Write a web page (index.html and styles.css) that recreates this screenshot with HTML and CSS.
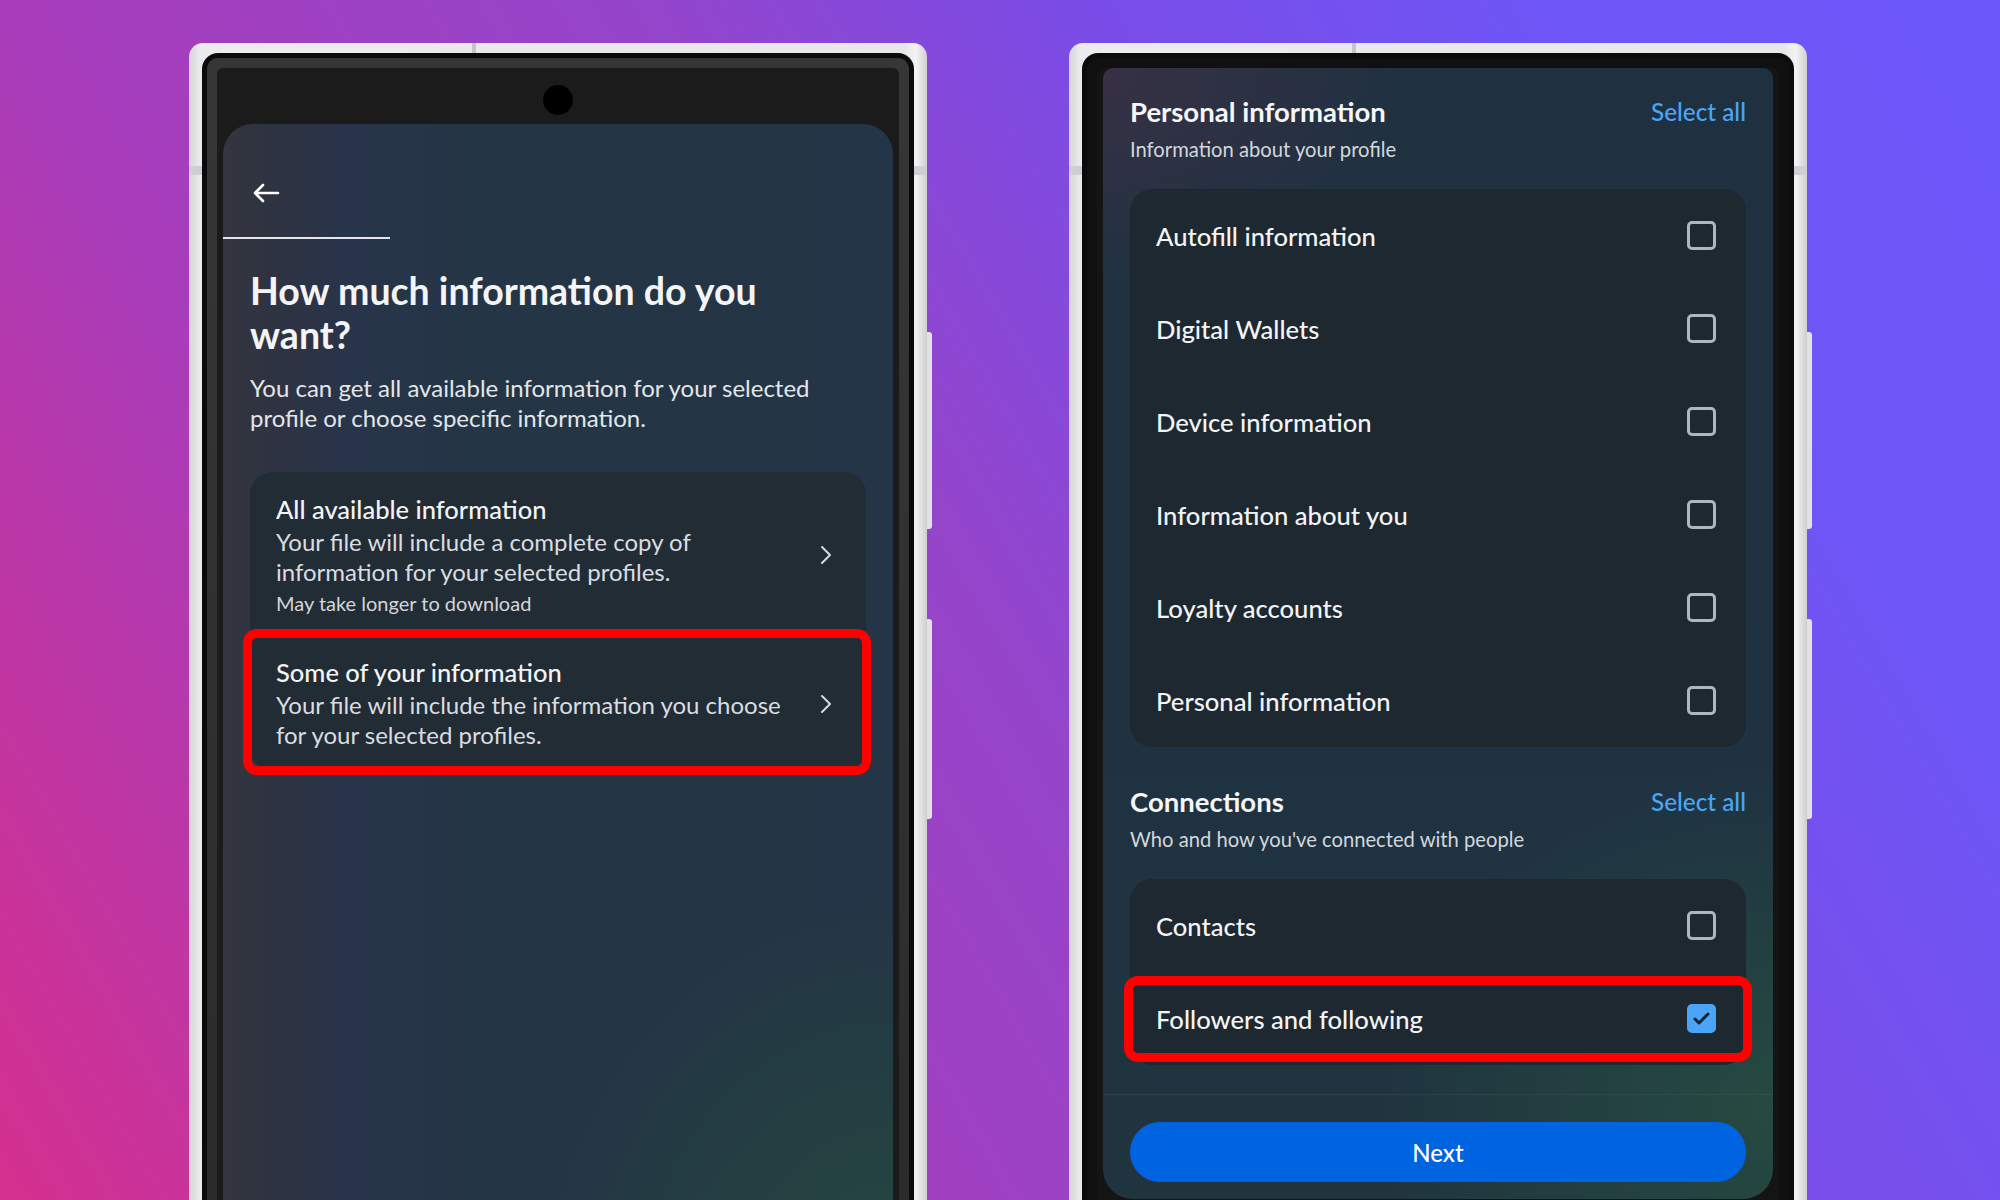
FILE: index.html
```html
<!DOCTYPE html>
<html lang="en">
<head>
<meta charset="utf-8">
<title>Download your information</title>
<link rel="stylesheet" href="styles.css">
</head>
<body>
<div class="stage">

  <div class="phone">
    <span class="notch-top"></span>
    <span class="notch-side notch-left"></span>
    <span class="notch-side notch-right"></span>
    <span class="side-btn side-btn-1"></span>
    <span class="side-btn side-btn-2"></span>
    <div class="bezel">
      <div class="screen">
        <div class="statusbar"><span class="camera"></span></div>
        <div class="panel panel-left">
          <div class="topnav">
            <svg class="back" width="28" height="22" viewBox="0 0 28 22" fill="none" stroke="#ffffff" stroke-width="2.6" stroke-linecap="round" stroke-linejoin="round"><path d="M26 11H3M11 3L3 11l8 8"/></svg>
          </div>
          <div class="nav-rule"></div>
          <div class="panel-body">
            <h1 class="title">How much information do you<br>want?</h1>
            <p class="lead">You can get all available information for your selected<br>profile or choose specific information.</p>
            <div class="options">
              <div class="option">
                <div class="option-text">
                  <div class="option-title">All available information</div>
                  <div class="option-desc">Your file will include a complete copy of<br>information for your selected profiles.</div>
                  <div class="option-note">May take longer to download</div>
                </div>
                <svg class="chev" width="14" height="20" viewBox="0 0 14 20" fill="none" stroke="#d6dadf" stroke-width="2" stroke-linecap="round" stroke-linejoin="round"><path d="M3 2l8 8-8 8"/></svg>
              </div>
              <div class="option option-marked">
                <div class="option-text">
                  <div class="option-title">Some of your information</div>
                  <div class="option-desc">Your file will include the information you choose<br>for your selected profiles.</div>
                </div>
                <svg class="chev" width="14" height="20" viewBox="0 0 14 20" fill="none" stroke="#d6dadf" stroke-width="2" stroke-linecap="round" stroke-linejoin="round"><path d="M3 2l8 8-8 8"/></svg>
                <span class="redbox redbox-option"></span>
              </div>
            </div>
          </div>
        </div>
      </div>
    </div>
  </div>

  <div class="phone">
    <span class="notch-top"></span>
    <span class="notch-side notch-left"></span>
    <span class="notch-side notch-right"></span>
    <span class="side-btn side-btn-1"></span>
    <span class="side-btn side-btn-2"></span>
    <div class="bezel bezel-dark">
      <div class="screen">
        <div class="panel panel-right">
          <section class="group group-first">
            <div class="group-head">
              <div>
                <h2 class="group-title">Personal information</h2>
                <p class="group-sub">Information about your profile</p>
              </div>
              <span class="select-all">Select all</span>
            </div>
            <ul class="list">
              <li class="row"><span>Autofill information</span><span class="check"></span></li>
              <li class="row"><span>Digital Wallets</span><span class="check"></span></li>
              <li class="row"><span>Device information</span><span class="check"></span></li>
              <li class="row"><span>Information about you</span><span class="check"></span></li>
              <li class="row"><span>Loyalty accounts</span><span class="check"></span></li>
              <li class="row"><span>Personal information</span><span class="check"></span></li>
            </ul>
          </section>
          <section class="group">
            <div class="group-head">
              <div>
                <h2 class="group-title">Connections</h2>
                <p class="group-sub">Who and how you've connected with people</p>
              </div>
              <span class="select-all">Select all</span>
            </div>
            <ul class="list">
              <li class="row"><span>Contacts</span><span class="check"></span></li>
              <li class="row row-marked"><span>Followers and following</span><span class="check check-on"><svg width="19" height="15" viewBox="0 0 19 15" fill="none" stroke="#18232d" stroke-width="3" stroke-linecap="round" stroke-linejoin="round"><path d="M3 8l4 4 9-9"/></svg></span><span class="redbox redbox-row"></span></li>
            </ul>
          </section>
          <div class="footer">
            <button class="next">Next</button>
          </div>
        </div>
      </div>
    </div>
  </div>

</div>
</body>
</html>
```

FILE: styles.css
```css
* {
  box-sizing: border-box;
  margin: 0;
  padding: 0;
}

html,
body {
  width: 2000px;
  height: 1200px;
  overflow: hidden;
}

body {
  font-family: "Lato", "Liberation Sans", sans-serif;
  color: #f2f3f5;
  background: linear-gradient(60deg, #d5308e 0%, #a83dbb 26%, #9545ca 49%, #7b4ce6 65%, #6f55f5 82%, #6b57fb 100%);
}

.stage {
  display: flex;
  gap: 142px;
  padding: 43px 0 0 189px;
  height: 1200px;
  overflow: hidden;
}

/* ---------- phone hardware ---------- */
.phone {
  position: relative;
  flex: none;
  width: 738px;
  height: 1260px;
  padding: 10px 13px 0;
  border-radius: 14px 14px 0 0;
  background: linear-gradient(90deg, #d4d4d6 0%, #ececee 1.5%, #e7e7e9 97%, #f3f3f4 98.5%, #cfcfd1 100%);
}

.notch-top {
  position: absolute;
  top: 0;
  left: 283px;
  width: 4px;
  height: 10px;
  background: #c6c6c9;
}

.notch-side {
  position: absolute;
  top: 123px;
  width: 13px;
  height: 9px;
  background: #cfcfd3;
}

.notch-left { left: 0; }
.notch-right { right: 0; }

.side-btn {
  position: absolute;
  right: -5px;
  width: 5px;
  border-radius: 0 3px 3px 0;
  background: #e2e2e4;
}

.side-btn-1 { top: 289px; height: 197px; }
.side-btn-2 { top: 576px; height: 200px; }

.bezel {
  height: 100%;
  padding: 10px 10px 0;
  border: 5px solid #0b0b0b;
  border-bottom: 0;
  border-radius: 16px 16px 0 0;
  background: linear-gradient(180deg, #363636 0%, #2a2a2a 100%);
}

.bezel-dark {
  background: #101010;
}

.screen {
  display: flex;
  flex-direction: column;
  height: 100%;
  padding: 0 6px;
  border-radius: 6px 6px 0 0;
  background: #1b1b1b;
}

.bezel-dark .screen {
  background: #141414;
}

.statusbar {
  display: flex;
  justify-content: center;
  height: 56px;
  padding-top: 17px;
  flex: none;
}

.camera {
  width: 30px;
  height: 30px;
  border-radius: 50%;
  background: #000;
}

/* ---------- shared panels ---------- */
.panel {
  flex: none;
  position: relative;
}

.panel-left {
  flex: 1;
  border-radius: 30px 30px 0 0;
  background:
    radial-gradient(ellipse 55% 35% at 100% 100%, rgba(38, 78, 60, 0.75), rgba(38, 78, 60, 0) 100%),
    linear-gradient(90deg, #33353f 0%, #2f3341 7%, #28344a 18%, #243545 36%, #233546 100%);
}

.topnav {
  height: 113px;
  padding: 58px 0 0 29px;
}

.back {
  display: block;
}

.nav-rule {
  width: 167px;
  height: 2px;
  background: #e4e6e9;
}

.panel-body {
  padding: 30px 27px 0;
}

.title {
  font-size: 37.5px;
  line-height: 44px;
  font-weight: 700;
  color: #f4f4f5;
}

.lead {
  margin-top: 16px;
  font-size: 24px;
  line-height: 30px;
  color: #e3e6e9;
}

.options {
  margin-top: 39px;
  border-radius: 22px;
  background: #222c35;
}

.option {
  position: relative;
  display: flex;
  align-items: center;
  padding: 22px 33px 20px 26px;
}

.option-text {
  flex: 1;
}

.option-title {
  font-size: 25.5px;
  line-height: 30px;
  font-weight: 500;
  color: #f3f4f6;
}

.option-desc {
  margin-top: 3px;
  font-size: 24px;
  line-height: 30px;
  color: #d9dde1;
}

.option-note {
  margin-top: 4px;
  font-size: 20px;
  line-height: 24px;
  color: #d2d6da;
}

.chev {
  flex: none;
  display: block;
}

.redbox {
  position: absolute;
  border: 9px solid #ff0000;
  border-radius: 14px;
  pointer-events: none;
}

.redbox-option {
  top: -6px;
  bottom: -5px;
  left: -7px;
  right: -5px;
}

/* ---------- right screen ---------- */
.panel-right {
  display: flex;
  flex-direction: column;
  border-radius: 10px 10px 30px 30px;
  background:
    radial-gradient(ellipse 60% 30% at 100% 92%, rgba(40, 84, 66, 0.7), rgba(40, 84, 66, 0) 100%),
    radial-gradient(ellipse 45% 20% at 0% 0%, rgba(62, 48, 70, 0.8), rgba(62, 48, 70, 0) 100%),
    linear-gradient(180deg, #1f3141 0%, #1f3242 60%, #20343e 100%);
}

.group {
  padding: 0 27px;
  margin-top: 40px;
}

.group-first {
  margin-top: 0;
  padding-top: 29px;
}

.group-head {
  display: flex;
  justify-content: space-between;
  align-items: flex-start;
}

.group-title {
  font-size: 27.5px;
  line-height: 30px;
  font-weight: 700;
  color: #f5f6f7;
}

.group-sub {
  margin-top: 10px;
  font-size: 20.2px;
  line-height: 24px;
  color: #d3d7db;
}

.select-all {
  font-size: 24.3px;
  line-height: 30px;
  font-weight: 500;
  color: #4aa6f2;
}

.list {
  list-style: none;
  margin-top: 28px;
  border-radius: 22px;
  background: #1e2830;
}

.row {
  position: relative;
  display: flex;
  align-items: center;
  justify-content: space-between;
  height: 93px;
  padding: 0 30px 0 26px;
  font-size: 25.6px;
  font-weight: 500;
  color: #f2f4f6;
}

.check {
  display: flex;
  align-items: center;
  justify-content: center;
  width: 29px;
  height: 29px;
  border: 3px solid #aeb6be;
  border-radius: 5px;
}

.check-on {
  border-color: #4ba4f5;
  background: #4ba4f5;
}

.check-on svg {
  display: block;
}

.redbox-row {
  top: 4px;
  bottom: 3px;
  left: -6px;
  right: -6px;
}

.footer {
  margin-top: 29px;
  padding: 27px 27px 17px;
  border-top: 1px solid rgba(255, 255, 255, 0.05);
}

.next {
  display: block;
  width: 100%;
  height: 60px;
  border: 0;
  border-radius: 30px;
  background: #0064e0;
  color: #ffffff;
  font-family: "Lato", "Liberation Sans", sans-serif;
  font-size: 24px;
  font-weight: 500;
}
```
